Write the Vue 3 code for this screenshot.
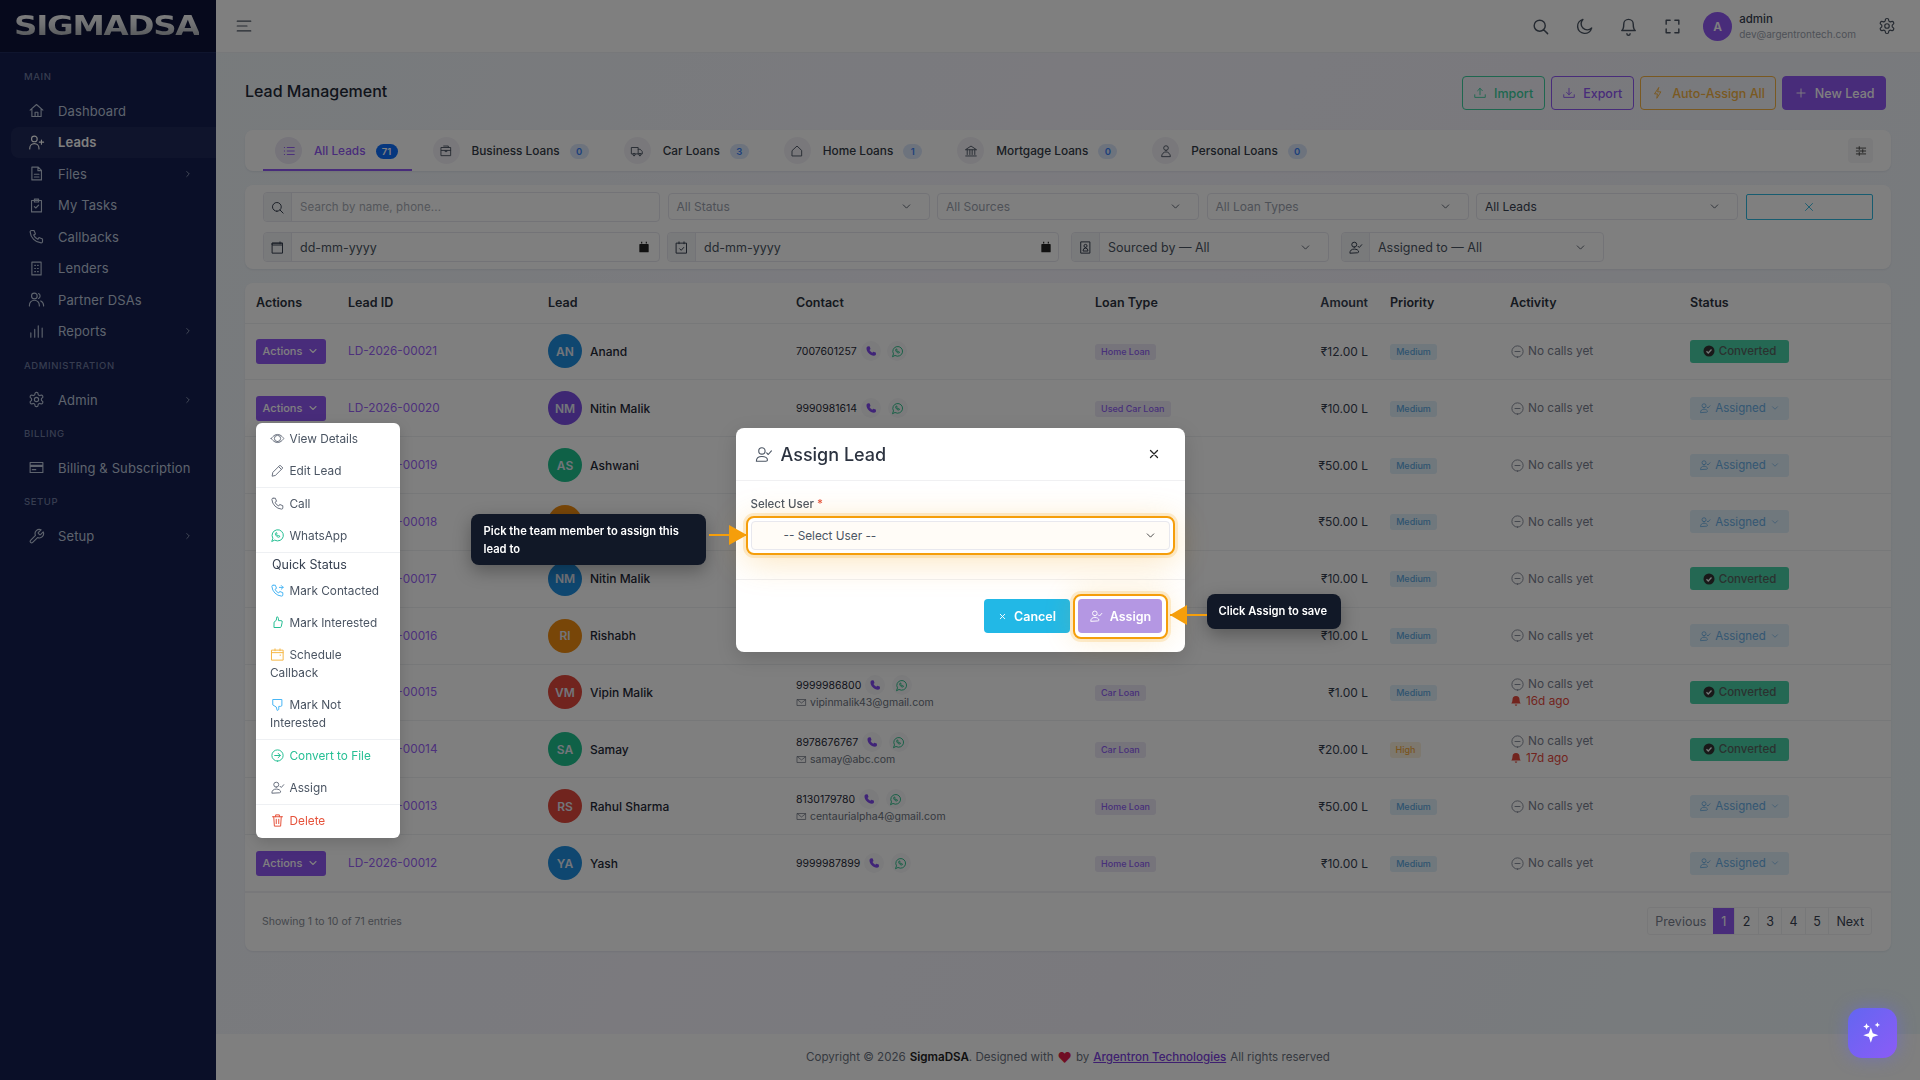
<template>
  <div class="app">
    <!-- sidebar -->
    <aside class="sidebar">
      <div class="logo-wrap"><span class="logo">SIGMADSA</span></div>
      <template v-for="sec in menu" :key="sec.title">
        <div class="nav-title">{{ sec.title }}</div>
        <div
          v-for="item in sec.items"
          :key="item.label"
          class="nav-item"
          :class="{ active: item.active }"
        >
          <svg class="ic nav-ic" viewBox="0 0 24 24"><path :d="icons[item.icon]" /></svg>
          <span class="nav-label">{{ item.label }}</span>
          <svg v-if="item.sub" class="ic nav-arrow" viewBox="0 0 24 24"><path :d="icons.right" /></svg>
        </div>
      </template>
    </aside>

    <div class="main">
      <!-- top bar -->
      <header class="topbar">
        <svg class="ic burger" viewBox="0 0 24 24"><path :d="icons.menu" /></svg>
        <div class="top-right">
          <svg v-for="n in ['search', 'moon', 'bell', 'expand']" :key="n" class="ic top-ic" viewBox="0 0 24 24"><path :d="icons[n]" /></svg>
          <div class="avatar-top">A</div>
          <div class="user-text">
            <div class="user-name">admin</div>
            <div class="user-mail">dev@argentrontech.com</div>
          </div>
          <svg class="ic gear" viewBox="0 0 24 24"><path :d="icons.gear" /></svg>
        </div>
      </header>

      <div class="content">
        <div class="title-row">
          <h1 class="page-title">Lead Management</h1>
          <div class="top-btns">
            <div class="btn out-green"><svg class="ic" viewBox="0 0 24 24"><path :d="icons.upload" /></svg>Import</div>
            <div class="btn out-purple"><svg class="ic" viewBox="0 0 24 24"><path :d="icons.download" /></svg>Export</div>
            <div class="btn out-amber"><svg class="ic" viewBox="0 0 24 24"><path :d="icons.flash" /></svg>Auto-Assign All</div>
            <div class="btn solid"><svg class="ic" viewBox="0 0 24 24"><path :d="icons.plus" /></svg>New Lead</div>
          </div>
        </div>

        <!-- tabs -->
        <div class="card tabs">
          <div v-for="t in tabs" :key="t.label" class="tab" :class="{ on: t.on }">
            <span class="tab-ic"><svg class="ic" viewBox="0 0 24 24"><path :d="icons[t.icon]" /></svg></span>
            <span class="tab-label">{{ t.label }}</span>
            <span class="tab-count">{{ t.count }}</span>
          </div>
          <div class="tab-set"><svg class="ic" viewBox="0 0 24 24"><path :d="icons.sliders" /></svg></div>
        </div>

        <!-- filters -->
        <div class="card filters">
          <div class="f-row r1">
            <div class="f-group w-search">
              <span class="addon"><svg class="ic" viewBox="0 0 24 24"><path :d="icons.search" /></svg></span>
              <span class="f-ph">Search by name, phone...</span>
            </div>
            <div v-for="s in ['All Status', 'All Sources', 'All Loan Types']" :key="s" class="f-select muted">
              {{ s }}<svg class="ic" viewBox="0 0 24 24"><path :d="icons.down" /></svg>
            </div>
            <div class="f-select">All Leads<svg class="ic" viewBox="0 0 24 24"><path :d="icons.down" /></svg></div>
            <div class="f-clear"><svg class="ic" viewBox="0 0 24 24"><path :d="icons.close" /></svg></div>
          </div>
          <div class="f-row r2">
            <div class="f-group w-search">
              <span class="addon"><svg class="ic" viewBox="0 0 24 24"><path :d="icons.calendar" /></svg></span>
              <span class="f-date">dd-mm-yyyy</span>
              <svg class="cal-fill" viewBox="0 0 24 24"><path :d="icons.calFill" /></svg>
            </div>
            <div class="f-group w-date2">
              <span class="addon"><svg class="ic" viewBox="0 0 24 24"><path :d="icons.calCheck" /></svg></span>
              <span class="f-date">dd-mm-yyyy</span>
              <svg class="cal-fill" viewBox="0 0 24 24"><path :d="icons.calFill" /></svg>
            </div>
            <div class="f-group w-src">
              <span class="addon"><svg class="ic" viewBox="0 0 24 24"><path :d="icons.contact" /></svg></span>
              <span class="f-date sm">Sourced by — All</span>
              <svg class="ic f-chev" viewBox="0 0 24 24"><path :d="icons.down" /></svg>
            </div>
            <div class="f-group w-src w-asg">
              <span class="addon"><svg class="ic" viewBox="0 0 24 24"><path :d="icons.userCheck" /></svg></span>
              <span class="f-date sm">Assigned to — All</span>
              <svg class="ic f-chev" viewBox="0 0 24 24"><path :d="icons.down" /></svg>
            </div>
          </div>
        </div>

        <!-- table -->
        <div class="card table-card">
          <div class="t-row t-head">
            <div>Actions</div><div>Lead ID</div><div>Lead</div><div>Contact</div><div>Loan Type</div>
            <div class="amt">Amount</div><div>Priority</div><div>Activity</div><div>Status</div>
          </div>
          <div v-for="(r, i) in rows" :key="r.id" class="t-row">
            <div class="c-act">
              <div class="act-btn">Actions<svg class="ic" viewBox="0 0 24 24"><path :d="icons.down" /></svg></div>
              <!-- open row menu -->
              <div v-if="i === 1" class="drop">
                <template v-for="m in dropItems" :key="m.label">
                  <div v-if="m.head" class="drop-head">{{ m.label }}</div>
                  <div v-else class="drop-item" :class="[m.cls, { sep: m.sep }]">
                    <svg class="ic" viewBox="0 0 24 24"><path :d="icons[m.icon]" /></svg>{{ m.label }}
                  </div>
                </template>
              </div>
            </div>
            <div class="c-id">{{ r.id }}</div>
            <div class="c-lead">
              <span class="lead-av" :class="r.color">{{ r.init }}</span>
              <span class="lead-name">{{ r.name }}</span>
            </div>
            <div class="c-contact">
              <div v-if="r.phone" class="ph-line">
                {{ r.phone }}
                <span class="bub"><svg class="ph-fill" viewBox="0 0 24 24"><path :d="icons.phoneFill" /></svg></span>
                <span class="bub"><svg class="ic wa" viewBox="0 0 24 24"><path :d="icons.whatsapp" /></svg></span>
              </div>
              <div v-if="r.email" class="mail-line">
                <svg class="ic" viewBox="0 0 24 24"><path :d="icons.mail" /></svg>{{ r.email }}
              </div>
            </div>
            <div><span v-if="r.loan" class="loan">{{ r.loan }}</span></div>
            <div class="amt">₹{{ r.amount }} L</div>
            <div><span class="prio" :class="{ high: r.high }">{{ r.high ? 'High' : 'Medium' }}</span></div>
            <div class="c-activity">
              <div class="no-calls"><svg class="ic" viewBox="0 0 24 24"><path :d="icons.minus" /></svg>No calls yet</div>
              <div v-if="r.ago" class="ago"><svg viewBox="0 0 24 24"><path :d="icons.bellFill" /></svg>{{ r.ago }}</div>
            </div>
            <div>
              <div v-if="r.conv" class="st conv">
                <svg viewBox="0 0 24 24"><circle cx="12" cy="12" r="11" fill="#333" /><path d="M7 12.500l3.500 3.500 6.500-7" fill="none" stroke="#e8f5f0" stroke-width="2.500" /></svg>Converted
              </div>
              <div v-else class="st asg">
                <svg class="ic" viewBox="0 0 24 24"><path :d="icons.userCheck" /></svg>Assigned<svg class="ic" viewBox="0 0 24 24"><path :d="icons.down" /></svg>
              </div>
            </div>
          </div>
          <div class="t-foot">
            <span class="entries">Showing 1 to 10 of 71 entries</span>
            <div class="pager">
              <span class="pg txt prev">Previous</span>
              <span class="pg cur">1</span>
              <span v-for="p in [2, 3, 4, 5]" :key="p" class="pg">{{ p }}</span>
              <span class="pg txt">Next</span>
            </div>
          </div>
        </div>
      </div>

      <footer class="page-foot">
        Copyright © 2026 <b>SigmaDSA</b>. Designed with <span class="heart">♥</span> by <a class="foot-link">Argentron Technologies</a> All rights reserved
      </footer>
    </div>

    <!-- tour overlay -->
    <div class="backdrop"></div>

    <div class="modal-wrap">
      <div class="modal">
        <div class="m-head">
          <svg class="ic m-ic" viewBox="0 0 24 24"><path :d="icons.userCheck" /></svg>
          <span class="m-title">Assign Lead</span>
          <svg class="ic m-close" viewBox="0 0 24 24"><path :d="icons.close" /></svg>
        </div>
        <div class="m-body">
          <div class="m-label">Select User <span class="req">*</span></div>
          <div class="ring-select">
            <div class="m-select">-- Select User --<svg class="ic" viewBox="0 0 24 24"><path :d="icons.down" /></svg></div>
          </div>
          <div class="tip tip-left">Pick the team member to assign this lead to</div>
          <div class="arrow arrow-left"></div>
        </div>
        <div class="m-foot">
          <div class="m-btn cancel"><svg class="ic" viewBox="0 0 24 24"><path :d="icons.close" /></svg>Cancel</div>
          <div class="ring-btn">
            <div class="m-btn assign"><svg class="ic" viewBox="0 0 24 24"><path :d="icons.userCheck" /></svg>Assign</div>
          </div>
          <div class="tip tip-right">Click Assign to save</div>
          <div class="arrow arrow-right"></div>
        </div>
      </div>
    </div>

    <div class="fab">
      <svg viewBox="0 0 24 24"><path :d="icons.sparkle" /></svg>
    </div>
  </div>
</template>

<script setup>
const icons = {
  home: 'M3 11.500l9-8 9 8M5.500 10v10.500h13V10M10 20.500v-6h4v6',
  userPlus: 'M9 11a4 4 0 1 0 0-8 4 4 0 0 0 0 8zM2.500 21v-1a6.500 6.500 0 0 1 13 0v1M19 8.500v6M16 11.500h6',
  file: 'M5.500 3h9l4.500 4.500V21h-13.500zM14 3v5h5M9 13h6.500M9 17h6.500',
  tasks: 'M5 5h14v16H5zM9 3h6v4H9zM9 13.500l2 2 4-4',
  phone: 'M5 3.500h3.500l2 5-2.500 1.500a11 11 0 0 0 6 6l1.500-2.500 5 2v3.500a2 2 0 0 1-2 2A17 17 0 0 1 3 5.500a2 2 0 0 1 2-2',
  lenders: 'M5.500 3h13v18h-13zM9.500 7.500h1M13.500 7.500h1M9.500 12h1M13.500 12h1M9.500 16.500h1M13.500 16.500h1',
  group: 'M9 11a4 4 0 1 0 0-8 4 4 0 0 0 0 8zM2 21v-1a7 7 0 0 1 14 0v1M15 3.500a4 4 0 0 1 0 7M18 14a7 7 0 0 1 4 6v1',
  bars: 'M4 20v-6M9.500 20V9M14.500 20V4M20 20V7',
  gear: 'M12.220 2h-.44a2 2 0 0 0-2 2v.18a2 2 0 0 1-1 1.730l-.43.25a2 2 0 0 1-2 0l-.15-.08a2 2 0 0 0-2.730.73l-.22.38a2 2 0 0 0 .73 2.730l.15.1a2 2 0 0 1 1 1.720v.51a2 2 0 0 1-1 1.740l-.15.09a2 2 0 0 0-.73 2.730l.22.38a2 2 0 0 0 2.730.73l.15-.08a2 2 0 0 1 2 0l.43.25a2 2 0 0 1 1 1.730V20a2 2 0 0 0 2 2h.44a2 2 0 0 0 2-2v-.18a2 2 0 0 1 1-1.730l.43-.25a2 2 0 0 1 2 0l.15.08a2 2 0 0 0 2.730-.73l.22-.39a2 2 0 0 0-.73-2.730l-.15-.08a2 2 0 0 1-1-1.740v-.5a2 2 0 0 1 1-1.740l.15-.09a2 2 0 0 0 .73-2.730l-.22-.38a2 2 0 0 0-2.730-.73l-.15.08a2 2 0 0 1-2 0l-.43-.25a2 2 0 0 1-1-1.730V4a2 2 0 0 0-2-2zM15 12a3 3 0 1 1-6 0 3 3 0 0 1 6 0z',
  card: 'M3 5h18v14H3zM3 9h18M3 10.500h18M6 15h5',
  wrench: 'M14.700 6.300a1 1 0 0 0 0 1.400l1.600 1.600a1 1 0 0 0 1.400 0l3.770-3.770a6 6 0 0 1-7.940 7.940l-6.910 6.910a2.120 2.120 0 0 1-3-3l6.910-6.910a6 6 0 0 1 7.940-7.940l-3.760 3.760z',
  right: 'M9 6l6 6-6 6',
  down: 'M6 9l6 6 6-6',
  menu: 'M3 5.500h18M3 12h13M3 18.500h18',
  search: 'M11 18a7 7 0 1 0 0-14 7 7 0 0 0 0 14zM21 21l-5-5',
  moon: 'M21 14A9 9 0 1 1 10 3a7.500 7.500 0 0 0 11 11z',
  bell: 'M6 9a6 6 0 0 1 12 0c0 6 2.500 8 2.500 8h-17S6 15 6 9M10 21a2 2 0 0 0 4 0',
  expand: 'M4 9V4h5M15 4h5v5M20 15v5h-5M9 20H4v-5',
  upload: 'M12 15V4M8 8l4-4 4 4M3 15v4.500h18V15',
  download: 'M12 4v11M8 11l4 4 4-4M3 15v4.500h18V15',
  flash: 'M13 3L6 13.500h5l-1 7.500 7-11h-5z',
  plus: 'M12 5v14M5 12h14',
  close: 'M6 6l12 12M18 6L6 18',
  list: 'M9 6h12M9 12h12M9 18h12M4 6h.5M4 12h.5M4 18h.5',
  brief: 'M4 6h16v14H4zM8 3.500h8V6M4 11h16M10.500 11v2h3v-2',
  truck: 'M3 6h11v11H3zM14 9h3.500l3.500 4v4h-7M7 20a2 2 0 1 0 0-4 2 2 0 0 0 0 4zM17 20a2 2 0 1 0 0-4 2 2 0 0 0 0 4z',
  house: 'M4 11l8-7.500 8 7.500v9.500H4z',
  bank: 'M3 9.500l9-6 9 6zM5.500 10v8M10 10v8M14 10v8M18.500 10v8M3 20.500h18',
  user: 'M12 11a4 4 0 1 0 0-8 4 4 0 0 0 0 8zM4.500 21a7.500 7.500 0 0 1 15 0z',
  sliders: 'M4 7h16M4 12h16M4 17h16M9 4.500v5M15 9.500v5M9 14.500v5',
  calendar: 'M4 5h16v16H4zM4 5h16v3H4zM16 3v3',
  calCheck: 'M4 5h16v16H4zM8 3v3M16 3v3M9 14l2.500 2.500 4-4.500',
  calFill: 'M5 7h14a1 1 0 0 1 1 1v12a1 1 0 0 1-1 1H5a1 1 0 0 1-1-1V8a1 1 0 0 1 1-1zM7 3h2v3H7zM15 3h2v3h-2z',
  contact: 'M5 3h14v18H5zM12 12a2.500 2.500 0 1 0 0-5 2.500 2.500 0 0 0 0 5zM8 17a4 4 0 0 1 8 0z',
  userCheck: 'M10 11.500a4 4 0 1 0 0-8 4 4 0 0 0 0 8zM3 20.500c0-4 3-6 7-6s7 2 7 4.500c0 1-1 1.500-2 1.500zM16 10l2 2 4-4.500',
  eye: 'M2 12s4-6.500 10-6.500S22 12 22 12s-4 6.500-10 6.500S2 12 2 12zM12 17a5 5 0 1 0 0-10 5 5 0 0 0 0 10z',
  pencil: 'M3.500 20.500l1-5.500L16 3.500l4.500 4.500L9 19.500zM14 6l4 4',
  whatsapp: 'M3 21l1.600-4.600A9 9 0 1 1 8 19.700zM9 8c-.9.8-.7 2.600 1 4.500s3.600 2.700 5 2l.7-1.500-2-1-.9.8c-.9-.3-1.800-1.200-2.200-2.200l.8-.9-.9-2z',
  phoneIn: 'M5 3.500h3.500l2 5-2.500 1.500a11 11 0 0 0 6 6l1.500-2.500 5 2v3.500a2 2 0 0 1-2 2A17 17 0 0 1 3 5.500a2 2 0 0 1 2-2M15 7h6M18 4l3 3-3 3',
  thumbUp: 'M7 11l3-2.500 1-5.500c1.500 0 2.500 1 2.500 2.500v3.500h4a2 2 0 0 1 2 2.500l-1.500 7a2 2 0 0 1-2 1.500H7z',
  calOrange: 'M3 5h18v16H3zM3 9h18M8 3v3M16 3v3M16 13h1',
  thumbDown: 'M5 4h14v9a2 2 0 0 1-2 2h-3v4c0 1.500-1 2.500-2.500 2.500L10 16l-5-3z',
  arrowCircle: 'M12 21a9 9 0 1 0 0-18 9 9 0 0 0 0 18zM7.500 12h9M13 8.500l3.500 3.500-3.500 3.500',
  trash: 'M4 6h16M9 6V3h6v3M6 6l1 15h10l1-15M10 10v7M14 10v7',
  mail: 'M3 5.500h18v13H3zM3 6l9 7 9-7',
  minus: 'M12 21a9 9 0 1 0 0-18 9 9 0 0 0 0 18zM8 12h8',
  phoneFill: 'M6.500 2.500l3 .5 1.500 5-2 2a12 12 0 0 0 5.500 5.500l2-2 5 1.500.5 3c0 2-2 3.500-4 3.500C10 21 3 14 3 6.500c0-2 1.500-4 3.500-4z',
  bellFill: 'M12 2a7 7 0 0 0-7 7c0 5-2.500 8-2.500 8h19S19 14 19 9a7 7 0 0 0-7-7zM9.500 19a2.500 2.500 0 0 0 5 0z',
  sparkle: 'M10 7l1.800 5.200L17 14l-5.200 1.800L10 21l-1.800-5.200L3 14l5.200-1.800zM6 3l.9 2.100L9 6l-2.100.9L6 9l-.9-2.100L3 6l2.100-.9zM16 2l.7 1.800L18.500 4.500l-1.800.7L16 7l-.7-1.800-1.800-.7 1.800-.7z'
}

const menu = [
  {
    title: 'MAIN',
    items: [
      { label: 'Dashboard', icon: 'home' },
      { label: 'Leads', icon: 'userPlus', active: true },
      { label: 'Files', icon: 'file', sub: true },
      { label: 'My Tasks', icon: 'tasks' },
      { label: 'Callbacks', icon: 'phone' },
      { label: 'Lenders', icon: 'lenders' },
      { label: 'Partner DSAs', icon: 'group' },
      { label: 'Reports', icon: 'bars', sub: true }
    ]
  },
  { title: 'ADMINISTRATION', items: [{ label: 'Admin', icon: 'gear', sub: true }] },
  { title: 'BILLING', items: [{ label: 'Billing & Subscription', icon: 'card' }] },
  { title: 'SETUP', items: [{ label: 'Setup', icon: 'wrench', sub: true }] }
]

const tabs = [
  { label: 'All Leads', icon: 'list', count: 71, on: true },
  { label: 'Business Loans', icon: 'brief', count: 0 },
  { label: 'Car Loans', icon: 'truck', count: 3 },
  { label: 'Home Loans', icon: 'house', count: 1 },
  { label: 'Mortgage Loans', icon: 'bank', count: 0 },
  { label: 'Personal Loans', icon: 'user', count: 0 }
]

const dropItems = [
  { label: 'View Details', icon: 'eye' },
  { label: 'Edit Lead', icon: 'pencil' },
  { label: 'Call', icon: 'phone', sep: true },
  { label: 'WhatsApp', icon: 'whatsapp', cls: 'ic-green' },
  { label: 'Quick Status', head: true },
  { label: 'Mark Contacted', icon: 'phoneIn', cls: 'ic-blue' },
  { label: 'Mark Interested', icon: 'thumbUp', cls: 'ic-green' },
  { label: 'Schedule Callback', icon: 'calOrange', cls: 'ic-orange' },
  { label: 'Mark Not Interested', icon: 'thumbDown', cls: 'ic-sky' },
  { label: 'Convert to File', icon: 'arrowCircle', cls: 'tx-green', sep: true },
  { label: 'Assign', icon: 'userCheck' },
  { label: 'Delete', icon: 'trash', cls: 'tx-red', sep: true }
]

const rows = [
  { id: 'LD-2026-00021', init: 'AN', name: 'Anand', color: 'blue', phone: '7007601257', loan: 'Home Loan', amount: '12.00', conv: true },
  { id: 'LD-2026-00020', init: 'NM', name: 'Nitin Malik', color: 'purple', phone: '9990981614', loan: 'Used Car Loan', amount: '10.00' },
  { id: 'LD-2026-00019', init: 'AS', name: 'Ashwani', color: 'green', amount: '50.00' },
  { id: 'LD-2026-00018', init: 'RI', name: '', color: 'orange', amount: '50.00' },
  { id: 'LD-2026-00017', init: 'NM', name: 'Nitin Malik', color: 'blue', amount: '10.00', conv: true },
  { id: 'LD-2026-00016', init: 'RI', name: 'Rishabh', color: 'orange', amount: '10.00' },
  { id: 'LD-2026-00015', init: 'VM', name: 'Vipin Malik', color: 'red', phone: '9999986800', email: 'vipinmalik43@gmail.com', loan: 'Car Loan', amount: '1.00', ago: '16d ago', conv: true },
  { id: 'LD-2026-00014', init: 'SA', name: 'Samay', color: 'green', phone: '8978676767', email: 'samay@abc.com', loan: 'Car Loan', amount: '20.00', ago: '17d ago', high: true, conv: true },
  { id: 'LD-2026-00013', init: 'RS', name: 'Rahul Sharma', color: 'red', phone: '8130179780', email: 'centaurialpha4@gmail.com', loan: 'Home Loan', amount: '50.00' },
  { id: 'LD-2026-00012', init: 'YA', name: 'Yash', color: 'blue', phone: '9999987899', loan: 'Home Loan', amount: '10.00' }
]
</script>

<style>
html, body { margin: 0; background: #f2f4fa; }
</style>

<style scoped>
* { box-sizing: border-box; }
.app {
  display: flex;
  width: 1920px;
  height: 1080px;
  overflow: hidden;
  font-family: Inter, "Noto Sans", sans-serif;
  color: #1f2937;
  background: linear-gradient(115deg, #eef6f8 0%, #f6f5fd 45%, #f4f3fb 65%, #eef8fa 100%);
}
.ic {
  fill: none;
  stroke: currentColor;
  stroke-width: 1.6;
  stroke-linecap: round;
  stroke-linejoin: round;
  flex: none;
}

/* sidebar */
.sidebar {
  width: 216px;
  flex: none;
  background: #141e50;
  padding-bottom: 20px;
}
.logo-wrap {
  height: 53px;
  background: #0c1338;
  border-bottom: 1px solid #1f2a5c;
  display: flex;
  align-items: center;
  padding-left: 14px;
}
.logo {
  font-family: "DejaVu Sans", sans-serif;
  font-weight: 700;
  font-size: 26px;
  letter-spacing: -1px;
  line-height: 1;
  display: inline-block;
  transform: scaleX(1.25);
  transform-origin: left center;
  background: linear-gradient(180deg, #ffffff 0%, #dfe2e6 45%, #a4a8ad 100%);
  -webkit-background-clip: text;
  background-clip: text;
  color: transparent;
}
.nav-title {
  font-size: 9.5px;
  font-weight: 500;
  letter-spacing: .6px;
  color: #6f7ba0;
  padding-left: 24px;
  height: 14px;
  line-height: 14px;
  margin: 11.5px 0 11.2px;
}
.logo-wrap + .nav-title { margin-top: 17px; }
.nav-item {
  display: flex;
  align-items: center;
  height: 31.5px;
  margin-left: 11px;
  padding-left: 17px;
  border-radius: 8px 0 0 8px;
  color: #bcc7db;
  font-size: 13px;
  letter-spacing: .12px;
}
.nav-item.active {
  background: rgba(255, 255, 255, .05);
  color: #fff;
  font-weight: 600;
}
.nav-ic { width: 17px; height: 17px; margin-right: 13px; }
.nav-arrow { width: 10px; height: 10px; margin-left: auto; margin-right: 23px; }

/* top bar */
.main {
  flex: 1;
  min-width: 0;
  display: flex;
  flex-direction: column;
}
.topbar {
  height: 53px;
  flex: none;
  background: #fff;
  display: flex;
  align-items: center;
  padding: 0 24px 0 19px;
  border-bottom: 1px solid #eef0f4;
}
.burger { width: 18px; height: 18px; color: #4b5563; }
.top-right { margin-left: auto; display: flex; align-items: center; }
.top-ic { width: 19px; height: 19px; margin-right: 25px; color: #4b5563; stroke-width: 1.8; }
.avatar-top {
  width: 29px;
  height: 29px;
  border-radius: 50%;
  background: #9158f5;
  color: #fff;
  font-size: 12px;
  font-weight: 600;
  display: flex;
  align-items: center;
  justify-content: center;
  margin-left: -4px;
  margin-right: 7px;
}
.user-name { font-size: 11.5px; font-weight: 500; color: #374151; line-height: 15px; }
.user-mail { font-size: 10px; color: #9ca3af; line-height: 14px; }
.gear { width: 18px; height: 18px; margin-left: 22px; color: #4b5563; }

.content {
  padding: 23px 29px 0;
  display: flex;
  flex-direction: column;
  gap: 14px;
}
.title-row {
  display: flex;
  align-items: center;
  justify-content: space-between;
  height: 34px;
  margin-bottom: 6px;
  padding-right: 5px;
}
.page-title { margin: 0; font-size: 16px; font-weight: 500; color: #1f2937; position: relative; top: -2px; }
.top-btns { display: flex; gap: 6px; }
.btn {
  height: 34px;
  display: flex;
  align-items: center;
  gap: 7px;
  padding: 0 10.5px;
  border: 1px solid;
  border-radius: 4px;
  font-size: 12.5px;
  font-weight: 500;
}
.btn .ic { width: 14px; height: 14px; }
.out-green { color: #3ccf9f; border-color: #3ccf9f; }
.out-purple { color: #9158f5; border-color: #9158f5; }
.out-amber { color: #f5b342; border-color: #f5b342; }
.solid { background: #9158f5; border-color: #9158f5; color: #fff; }

.card {
  background: #fff;
  border-radius: 8px;
  box-shadow: 0 1px 2px rgba(30, 40, 80, .08);
}

/* tabs */
.tabs {
  height: 41px;
  display: flex;
  align-items: center;
  gap: 9px;
  padding: 0 18px;
}
.tab {
  height: 41px;
  display: flex;
  align-items: center;
  padding: 2px 14px 0 12px;
  border-bottom: 2px solid transparent;
  font-size: 11.8px;
  font-weight: 500;
  color: #333a46;
}
.tab.on { border-bottom-color: #9158f5; color: #9158f5; }
.tab-ic {
  width: 27px;
  height: 27px;
  border-radius: 50%;
  background: #f3f1f7;
  color: #4b5563;
  display: flex;
  align-items: center;
  justify-content: center;
  margin-right: 12px;
}
.on .tab-ic { background: #ece8f5; color: #9158f5; }
.tab-ic .ic { width: 14px; height: 14px; }
.tab-count {
  margin-left: 10px;
  height: 15px;
  min-width: 19px;
  padding: 0 5px;
  border-radius: 8px;
  background: #dbe6fb;
  color: #3b82f6;
  font-size: 9.5px;
  font-weight: 600;
  display: flex;
  align-items: center;
  justify-content: center;
  position: relative;
  top: 1px;
}
.on .tab-count { background: #0d6efd; color: #fff; min-width: 22px; }
.tab-set {
  margin-left: auto;
  width: 25px;
  height: 25px;
  border-radius: 4px;
  background: #f5f5f6;
  display: flex;
  align-items: center;
  justify-content: center;
  color: #444;
}
.tab-set .ic { width: 14px; height: 14px; }

/* filters */
.filters {
  height: 84px;
  padding: 7px 18px;
  display: flex;
  flex-direction: column;
  gap: 10px;
}
.f-row { display: flex; align-items: center; height: 30px; }
.r1 { gap: 7.5px; align-items: flex-start; }
.r2 { gap: 12px; }
.f-group {
  height: 30px;
  display: flex;
  align-items: center;
  border: 1px solid #e6e7ee;
  border-radius: 4px;
  font-size: 12.5px;
}
.w-search { width: 397px; flex: none; }
.r2 .w-search { margin-right: -5px; }
.w-date2 { width: 392px; flex: none; }
.w-src { width: 258px; flex: none; }
.w-asg { width: 263px; }
.addon {
  width: 28px;
  align-self: stretch;
  flex: none;
  background: #f3f4f6;
  border-right: 1px solid #e6e7ee;
  border-radius: 4px 0 0 4px;
  display: flex;
  align-items: center;
  justify-content: center;
  color: #374151;
}
.addon .ic { width: 15px; height: 15px; }
.f-ph { padding-left: 8px; color: #a8adb6; font-size: 11.5px; letter-spacing: .1px; }
.f-date { padding-left: 8px; color: #4b5563; font-size: 12.5px; }
.cal-fill { width: 14px; height: 14px; fill: #222; margin-left: auto; margin-right: 8px; }
.w-date2 .cal-fill { margin-right: 5px; }
.f-chev { width: 13px; height: 13px; margin-left: auto; margin-right: 16px; color: #4b5563; }
.f-select {
  width: 262px;
  flex: none;
  height: 27px;
  margin-top: 1px;
  display: flex;
  align-items: center;
  justify-content: space-between;
  padding: 0 16px 0 8px;
  border: 1px solid #e6e7ee;
  border-radius: 4px;
  font-size: 12px;
  color: #374151;
}
.f-select.muted { color: #9ca3af; }
.f-select .ic { width: 13px; height: 13px; color: #4b5563; }
.f-clear {
  flex: 1;
  height: 26px;
  margin-top: 2px;
  border: 1px solid #2fb8e0;
  border-radius: 2px;
  color: #2fb8e0;
  display: flex;
  align-items: center;
  justify-content: center;
}
.f-clear .ic { width: 14px; height: 14px; }

/* table */
.table-card { height: 668px; }
.t-row {
  display: grid;
  grid-template-columns: 92px 200px 248px 299px 166px 129px 120px 180px 1fr;
  align-items: center;
  height: 56.85px;
  border-bottom: 1px solid #eef0f3;
  font-size: 12px;
}
.t-row > div { padding-left: 11px; position: relative; }
.t-head { height: 40.5px; font-weight: 600; font-size: 12.5px; color: #2c3340; }
.amt { text-align: right; padding-right: 11px; color: #374151; }
.t-row > .amt { padding-left: 0; }
.act-btn {
  width: 70px;
  height: 25px;
  background: #9158f5;
  color: #fff;
  border-radius: 3px;
  font-size: 11px;
  font-weight: 500;
  display: flex;
  align-items: center;
  justify-content: center;
  gap: 5px;
}
.act-btn .ic { width: 12px; height: 12px; stroke-width: 2.2; }
.c-id { color: #9a62f8; font-size: 11.8px; }
.c-lead { display: flex; align-items: center; gap: 8px; }
.lead-av {
  width: 34px;
  height: 34px;
  border-radius: 50%;
  color: #e5eaf5;
  font-size: 12px;
  font-weight: 600;
  display: flex;
  align-items: center;
  justify-content: center;
  flex: none;
}
.lead-av.blue { background: #1f8fe0; }
.lead-av.purple { background: #7d4fe6; }
.lead-av.green { background: #1fc28f; }
.lead-av.orange { background: #f08c10; }
.lead-av.red { background: #e2483c; }
.lead-name { font-size: 12px; font-weight: 500; color: #1f2937; }
.ph-line { display: flex; align-items: center; font-size: 10.5px; color: #1f2937; }
.bub {
  width: 20px;
  height: 20px;
  border-radius: 50%;
  background: #f6f6f8;
  display: flex;
  align-items: center;
  justify-content: center;
  margin-left: 6.5px;
}
.bub:first-of-type { margin-left: 4px; }
.ph-fill { width: 12px; height: 12px; fill: #8048f0; }
.wa { width: 13px; height: 13px; color: #2ec08c; stroke-width: 1.8; }
.mail-line {
  display: flex;
  align-items: center;
  gap: 3px;
  color: #6b7280;
  font-size: 10.5px;
  margin-top: 1px;
}
.mail-line .ic { width: 11px; height: 11px; }
.loan {
  display: inline-block;
  height: 16px;
  line-height: 16px;
  padding: 0 6px;
  border-radius: 3px;
  background: #ece8f6;
  color: #9060f4;
  font-size: 9px;
  font-weight: 500;
}
.prio {
  display: inline-block;
  width: 47px;
  height: 16px;
  line-height: 16px;
  text-align: center;
  border-radius: 3px;
  background: #e0f0fa;
  color: #5fa8e0;
  font-size: 9px;
  font-weight: 500;
}
.prio.high { width: 31px; background: #fbf0dc; color: #f3a93c; }
.c-activity { color: #7a8090; font-size: 11.8px; }
.no-calls { display: flex; align-items: center; gap: 3px; }
.no-calls .ic { width: 15px; height: 15px; stroke-width: 1.4; }
.ago { display: flex; align-items: center; gap: 4px; color: #e5483c; margin-top: 2px; }
.ago svg { width: 12px; height: 12px; fill: #e5483c; }
.st {
  width: 99px;
  height: 23px;
  border-radius: 3px;
  font-size: 11.5px;
  display: flex;
  align-items: center;
  justify-content: center;
  gap: 4px;
}
.st.conv { background: #48d0a6; color: #56645f; font-weight: 500; }
.st.conv svg { width: 12px; height: 12px; }
.st.asg { background: #e0f0fa; color: #68aee6; }
.st.asg .ic { width: 12px; height: 12px; }
.st.asg .ic:last-child { width: 10px; height: 10px; }
.t-foot {
  height: 59px;
  display: flex;
  align-items: center;
  justify-content: space-between;
  padding: 0 19px 0 17px;
  border-top: 2px solid #f0f1f4;
  margin-top: -1px;
}
.entries { font-size: 10.5px; color: #8a8f99; }
.pager { display: flex; border: 1px solid #f0f0f2; border-radius: 3px; height: 28px; font-size: 12.5px; color: #374151; }
.pg { display: flex; align-items: center; justify-content: center; width: 23.5px; border-left: 1px solid #eff0f2; }
.pg.txt { width: auto; padding: 0 7px; }
.pg:first-child { border-left: 0; }
.pg.prev { color: #7b8190; }
.pg.cur { background: #9158f5; color: #fff; width: 21px; border-left: 0; }

.page-foot {
  margin-top: auto;
  height: 46px;
  flex: none;
  background: #fff;
  font-size: 11.6px;
  color: #6b7280;
  display: flex;
  align-items: center;
  justify-content: center;
  gap: 4px;
}
.page-foot b { color: #222; font-weight: 600; margin-right: -4px; }
.heart { color: #e11d48; font-size: 14px; }
.foot-link { color: #7c3fe0; text-decoration: underline; font-weight: 500; }

/* overlay, menu and modal sit over the page */
.backdrop {
  position: fixed;
  inset: 0;
  background: rgba(0, 0, 0, .5);
  z-index: 10;
}
.drop {
  position: absolute;
  top: calc(50% + 15px);
  left: 11px;
  width: 144px;
  height: 415px;
  background: #fff;
  border-radius: 6px;
  box-shadow: 0 4px 14px rgba(0, 0, 0, .15);
  z-index: 20;
  font-size: 11.8px;
  color: #4b5563;
}
.drop-item {
  padding: 7px 14px;
  line-height: 18px;
}
.drop-item.sep { border-top: 1px solid #eef0f3; }
.drop-item .ic {
  width: 15px;
  height: 15px;
  vertical-align: -3px;
  margin-right: 4.5px;
  color: #6b7280;
}
.drop-head {
  padding: 3px 16px 1px;
  height: 22.5px;
  font-size: 12.5px;
  line-height: 18px;
  border-top: 1px solid #eef0f3;
  color: #374151;
}
.ic-green .ic { color: #26bf94; }
.ic-blue .ic { color: #49b6f5; }
.ic-orange .ic { color: #f5b849; }
.ic-sky .ic { color: #49b6f5; }
.tx-green, .tx-green .ic { color: #26bf94; }
.tx-red, .tx-red .ic { color: #e6533c; }

.modal-wrap {
  position: fixed;
  inset: 0;
  z-index: 30;
  display: flex;
  align-items: center;
  justify-content: center;
  pointer-events: none;
}
.modal {
  position: relative;
  width: 449px;
  height: 224px;
  background: #fff;
  border-radius: 8px;
  box-shadow: 0 6px 20px rgba(0, 0, 0, .15);
}
.m-head {
  height: 53px;
  display: flex;
  align-items: center;
  padding: 0 24px 0 18px;
  border-bottom: 1px solid #f0f0f2;
}
.m-ic { width: 19px; height: 19px; margin-right: 8px; color: #4b5563; stroke-width: 1.4; }
.m-title { font-size: 18px; font-weight: 500; color: #2c3340; }
.m-close { width: 14px; height: 14px; margin-left: auto; color: #222; stroke-width: 2.2; }
.m-body {
  height: 99px;
  padding: 16px 10px 0 10px;
  border-bottom: 1px solid #f0f0f2;
}
.m-label { font-size: 11.5px; font-weight: 500; color: #4b5563; line-height: 14px; padding-left: 5px; margin-bottom: 5px; }
.req { color: #e6533c; }
.ring-select {
  height: 39px;
  padding: 3px;
  border: 2.5px solid #f59e0b;
  border-radius: 8px;
  box-shadow: 0 0 0 3px rgba(245, 158, 11, .18), 0 6px 34px rgba(245, 158, 11, .28);
  background: #fff;
  position: relative;
}
.m-select {
  height: 100%;
  background: #fffcf7;
  border: 1px solid #e8e8ee;
  border-radius: 4px;
  padding: 0 12px 0 32px;
  font-size: 11.8px;
  color: #4b5563;
  display: flex;
  align-items: center;
  justify-content: space-between;
}
.m-select .ic { width: 13px; height: 13px; color: #333; }
.m-foot {
  height: 72px;
  display: flex;
  align-items: center;
  justify-content: flex-end;
  padding: 0 17px 0 0;
  gap: 2.5px;
}
.m-btn {
  height: 34px;
  display: flex;
  align-items: center;
  justify-content: center;
  gap: 7px;
  border-radius: 4px;
  font-size: 12.5px;
  font-weight: 600;
  color: #fff;
}
.m-btn.cancel { width: 86px; background: #22b8e6; }
.m-btn.cancel .ic { width: 9px; height: 9px; stroke-width: 2.5; }
.m-btn.assign { width: 84px; background: #b497e3; }
.m-btn.assign .ic { width: 14px; height: 14px; }
.ring-btn {
  padding: 3.5px;
  border: 2.5px solid #f59e0b;
  border-radius: 8px;
  box-shadow: 0 0 0 3px rgba(245, 158, 11, .18), 0 0 30px rgba(245, 158, 11, .2);
  background: #fff;
}
.tip {
  position: absolute;
  background: #111827;
  color: #fff;
  border-radius: 8px;
  font-size: 11.2px;
  font-weight: 600;
  box-shadow: 0 6px 18px rgba(0, 0, 0, .3);
}
.tip-left { left: -265px; top: 86px; width: 235px; height: 51px; padding: 8px 13px; line-height: 18px; }
.tip-right { left: 471px; top: 166px; height: 35px; width: 134px; padding: 0 12px; line-height: 35px; white-space: nowrap; }
.arrow { position: absolute; }
.arrow-left {
  left: -27px;
  top: 106px;
  width: 38px;
  height: 2px;
  background: #f59e0b;
}
.arrow-left::after {
  content: "";
  position: absolute;
  right: 0;
  top: -9px;
  border-left: 18px solid #f59e0b;
  border-top: 10px solid transparent;
  border-bottom: 10px solid transparent;
}
.arrow-right {
  left: 434px;
  top: 186px;
  width: 37px;
  height: 2px;
  background: #f59e0b;
}
.arrow-right::after {
  content: "";
  position: absolute;
  left: 0;
  top: -9px;
  border-right: 17px solid #f59e0b;
  border-top: 10px solid transparent;
  border-bottom: 10px solid transparent;
}
.fab {
  position: fixed;
  left: 1848px;
  top: 1008px;
  width: 49px;
  height: 50px;
  border-radius: 14px;
  background: linear-gradient(135deg, #6366f1, #8b5cf6);
  box-shadow: 0 0 18px rgba(99, 102, 241, .45);
  z-index: 40;
  display: flex;
  align-items: center;
  justify-content: center;
}
.fab svg { width: 26px; height: 26px; fill: #fff; }
</style>
